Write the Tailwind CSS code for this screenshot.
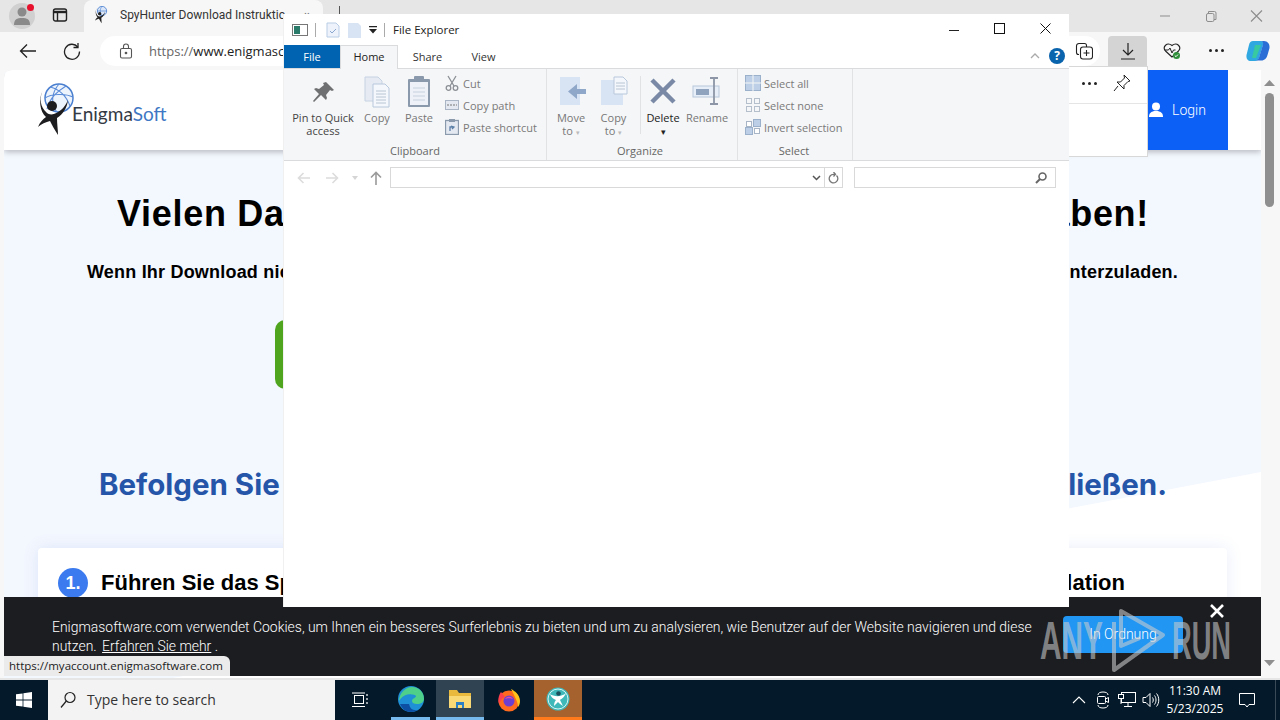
<!DOCTYPE html>
<html lang="de">
<head>
<meta charset="UTF-8">
<title>File Explorer</title>
<script src="https://cdn.jsdelivr.net/npm/@tailwindcss/browser@4"></script>
</head>
<body class="bg-[#e6e6e6]">
<div class="relative w-[1280px] h-[720px] overflow-hidden flex flex-col font-['Open_Sans',sans-serif]">

  <!-- browser tab strip -->
  <div class="h-[32px] bg-[#e6e6e6] flex items-end shrink-0">
    <div class="relative w-[44px] h-[32px] flex items-center justify-center -mt-[2px]">
      <div class="w-[26px] h-[26px] rounded-full bg-[#d0d0d0] flex items-center justify-center">
        <svg width="18" height="20" viewBox="0 0 18 20"><circle cx="9" cy="6" r="4.500" fill="#8a8a8a"/><path d="M1 19c0-6 3-7 8-7s8 1 8 7z" fill="#8a8a8a"/></svg>
      </div>
      <span class="absolute left-[27px] top-[4px] w-[7px] h-[7px] rounded-full bg-[#e8112d]"></span>
    </div>
    <div class="w-[32px] h-[32px] flex items-center justify-center pb-[2px]">
      <svg width="16" height="16" viewBox="0 0 16 16" fill="none" stroke="#222" stroke-width="1.400"><rect x="1.500" y="2" width="13" height="12" rx="2"/><path d="M1.500 5h13" stroke-width="2.400"/><path d="M5.500 5v9"/></svg>
    </div>
    <div class="relative ml-[8px] w-[239px] h-[32px] bg-[#f7f7f7] rounded-t-lg flex items-center pl-[9px] pb-[2px]">
      <svg width="16" height="18" viewBox="0 0 36 54"><circle cx="21" cy="15" r="14" fill="#dbe7f8" stroke="#4a7fd0" stroke-width="2.500"/><path d="M7 15h28M21 1c-7 8-7 20 0 28" stroke="#4a7fd0" stroke-width="2" fill="none"/><circle cx="14" cy="23" r="5" fill="#222"/><path d="M5 7C1 15 2 24 9 30c2 2 7 2 11-1 4-2 8-7 10-12-1 8-5 14-11 18 0 6 1 12 1 17-4-6-6-10-8-14-4 1-9 3-12 6 2-5 5-8 8-10C2 29 0 16 5 7z" fill="#222"/></svg>
      <span class="ml-[11px] w-[165px] overflow-hidden font-['Roboto',sans-serif] text-[12px] leading-[16px] text-[#333] whitespace-nowrap">SpyHunter Download Instruktic</span>
      <span class="absolute left-[220px] top-[10px] text-[10px] leading-none text-[#555]">×</span>
    </div>
    <div class="relative flex-1 h-[32px]">
      <span class="absolute left-[16px] top-[6px] w-px h-[8px] bg-[#555]"></span>
    </div>
    <div class="h-[32px] flex items-center">
      <svg class="w-[46px] h-[16px]" viewBox="0 0 46 16" fill="none" stroke="#8d8d8d"><path d="M18 8h10"/></svg>
      <svg class="w-[46px] h-[16px]" viewBox="0 0 46 16" fill="none" stroke="#8d8d8d"><rect x="18.500" y="5.500" width="7.500" height="8" rx="1.500"/><path d="M20.500 5V3.500h6a1.500 1.500 0 0 1 1.500 1.500v6.500h-2"/></svg>
      <svg class="w-[46px] h-[16px]" viewBox="0 0 46 16" fill="none" stroke="#8d8d8d" stroke-width="1.100"><path d="M17 2.500l11 11M28 2.500l-11 11"/></svg>
    </div>
  </div>

  <!-- browser toolbar -->
  <div class="h-[38px] bg-[#f7f7f7] flex items-center shrink-0 relative">
    <svg class="ml-[19px]" width="18" height="16" viewBox="0 0 18 16" fill="none" stroke="#222" stroke-width="1.300"><path d="M17 8H1.500M8 1.500 1.500 8 8 14.500"/></svg>
    <svg class="ml-[26px]" width="18" height="18" viewBox="0 0 18 18" fill="none" stroke="#222" stroke-width="1.300"><path d="M14.800 5A7.500 7.500 0 1 0 16.500 9.500"/><path d="M15 1v4.500h-4.500"/></svg>
    <div class="ml-[19px] w-[1000px] h-[30px] bg-white rounded-full flex items-center pl-[19px]">
      <svg width="14" height="16" viewBox="0 0 14 16" fill="none" stroke="#555" stroke-width="1.100"><rect x="1.500" y="5.500" width="11" height="9.500" rx="1.500"/><path d="M4.500 5.500V3.500a2.500 2.500 0 0 1 5 0v2"/><circle cx="7" cy="10" r=".8" fill="#555"/></svg>
      <span class="ml-[16px] text-[13px] leading-none whitespace-nowrap text-[#666]">https://<span class="text-[#222]">www.enigmasc</span></span>
    </div>
    <div class="absolute left-[1075px] top-[10px]">
      <svg width="18" height="18" viewBox="0 0 18 18" fill="none" stroke="#222" stroke-width="1.100"><path d="M4 12.500H3.500A2 2 0 0 1 1.500 10.500V4A2.500 2.500 0 0 1 4 1.500h5.500a2 2 0 0 1 2 2V5"/><rect x="5.500" y="5" width="12" height="12" rx="2.500"/><path d="M11.500 8v6M8.500 11h6"/></svg>
    </div>
    <div class="absolute left-[1108px] top-[4px] w-[39px] h-[30px] bg-[#d4d4d4] rounded-t flex items-center justify-center">
      <svg width="14" height="18" viewBox="0 0 14 18" fill="none" stroke="#222" stroke-width="1.200"><path d="M7 1v12M2 8l5 5 5-5M0 17h14"/></svg>
    </div>
    <div class="absolute left-[1163px] top-[10px]">
      <svg width="18" height="18" viewBox="0 0 18 18"><path d="M9 15 2.500 9C-1 5 4-.5 9 3.500 14-.5 19 5 15.500 9z" fill="none" stroke="#222" stroke-width="1.100"/><path d="M1.500 8h4l1.500-2 2 5 1.500-3h2" fill="none" stroke="#222" stroke-width="1"/><circle cx="13.500" cy="13.500" r="3.500" fill="#2f8f3a"/><path d="m11.800 13.500 1.200 1.200 2-2.200" stroke="#fff" fill="none"/></svg>
    </div>
    <div class="absolute left-[1209px] top-[17px] flex gap-[3px]">
      <span class="w-[3px] h-[3px] rounded-full bg-[#222]"></span><span class="w-[3px] h-[3px] rounded-full bg-[#222]"></span><span class="w-[3px] h-[3px] rounded-full bg-[#222]"></span>
    </div>
    <div class="absolute left-[1246px] top-[7px]">
      <svg width="24" height="24" viewBox="0 0 24 24"><path d="M7 2h8c2 0 2.500 2 2 4l-4 13c-.600 2-2 3-4 3H5c-3 0-5-2-4.500-6L3 6c.500-2.500 2-4 4-4z" fill="#2fa7e0"/><path d="M15 2h3c3.500 0 6 3 5.500 7l-2 7c-.700 3-3 5.500-6 5.500H9c2 0 3.500-1 4-3l4-13c.400-1.500-.500-3.500-2-3.500z" fill="#2b6fd6"/><path d="M9 6h6l-5 13H6z" fill="#38c9a0"/></svg>
    </div>
  </div>

  <!-- page viewport -->
  <div class="relative h-[608px] bg-[#f7f7f7] shrink-0 pl-[4px] pr-[2px] flex">
    <div class="relative w-[1257px] h-[608px] bg-[#f3f7fe] rounded-tl-lg overflow-hidden">
      <div class="absolute inset-0 bg-white [clip-path:polygon(100%_402px,0_640px,100%_640px)]"></div>

      <!-- site header -->
      <div class="relative h-[80px] bg-white shadow-[0_2px_6px_rgba(0,0,0,0.25)] flex items-center pl-[34px]">
        <svg width="36" height="54" viewBox="0 0 36 54"><circle cx="21" cy="15" r="14" fill="#eef4fc" stroke="#4a7fd0" stroke-width="1.500"/><path d="M7 15c6-4 20-5 28-1M12 4c8 2 16 8 20 19M21 1c-7 8-9 20-2 28M28 3C20 8 12 14 9 26" stroke="#5a8bd8" stroke-width="1.100" fill="none"/><circle cx="14" cy="23" r="5" fill="#1d1d1f"/><path d="M5 7C1 15 2 24 9 30c2 2 7 2 11-1 4-2 8-7 10-12-1 8-5 14-11 18 0 6 1 12 1 17-4-6-6-10-8-14-4 1-9 3-12 6 2-5 5-8 8-10C2 29 0 16 5 7z" fill="#1d1d1f"/></svg>
        <span class="-ml-[2px] mt-[7px] text-[19px] leading-none font-['Lato',sans-serif] text-[#333a44] whitespace-nowrap">Enigma<span class="text-[#3f78c4]">Soft</span></span>
        <div class="absolute left-[1144px] top-0 w-[80px] h-[80px] bg-[#0d60f5] flex items-center pl-[1px] gap-[9px] text-white">
          <svg width="14" height="16" viewBox="0 0 14 16" fill="#fff"><circle cx="7" cy="4.500" r="4"/><path d="M0 15c0-4 2-5 5-6h4c3 1 5 2 5 6z"/></svg>
          <span class="text-[14px] leading-none font-['Roboto',sans-serif] font-light">Login</span>
        </div>
      </div>

      <!-- download text -->
      <div class="relative">
        <div class="absolute left-[113px] top-[46px] w-[1032px] flex justify-between font-['Liberation_Sans',sans-serif] font-bold text-[36px] tracking-[0.7px] leading-none text-black whitespace-nowrap"><span>Vielen Dank</span><span>haben!</span></div>
        <div class="absolute left-[83px] top-[113px] w-[1091px] flex justify-between font-['Liberation_Sans',sans-serif] font-bold text-[18px] tracking-[0.2px] leading-none text-black whitespace-nowrap"><span>Wenn Ihr Download nicht</span><span>herunterzuladen.</span></div>
        <div class="absolute left-[271px] top-[170px] w-[30px] h-[69px] rounded-l-[10px] bg-[#4fa61e]"></div>
        <div class="absolute left-[95px] top-[320px] w-[1068px] flex justify-between font-['Inter',sans-serif] font-bold text-[29.500px] leading-none text-[#2455a8] whitespace-nowrap"><span>Befolgen Sie</span><span>abschließen.</span></div>
      </div>

      <!-- first step card -->
      <div class="absolute left-[34px] top-[478px] w-[1189px] h-[100px] bg-white rounded-t shadow-[0_0_16px_rgba(90,130,220,0.14)] flex items-start pl-[20px] pt-[20px]">
        <div class="w-[30px] h-[30px] rounded-full bg-[#3b7bef] flex items-center justify-center shrink-0 font-['Liberation_Sans',sans-serif] font-bold text-[18px] leading-none text-white">1.</div>
        <div class="ml-[13px] w-[1024px] flex justify-between font-['Liberation_Sans',sans-serif] font-bold text-[22px] leading-[30px] text-black whitespace-nowrap"><span>Führen Sie das Sp</span><span>Installation</span></div>
      </div>

      <!-- cookie banner -->
      <div class="absolute left-0 top-[527px] w-[1257px] h-[79px] bg-[#1c1d21] text-white">
        <p class="absolute left-[48px] top-[21px] w-[990px] font-['Roboto',sans-serif] font-light text-[13.950px] leading-[19px]">Enigmasoftware.com verwendet Cookies, um Ihnen ein besseres Surferlebnis zu bieten und um zu analysieren, wie Benutzer auf der Website navigieren und diese nutzen. <span class="ml-[2px] underline">Erfahren Sie mehr</span> .</p>
        <div class="absolute left-[1059px] top-[19px] w-[120px] h-[37px] bg-[#2196f3] rounded-sm flex items-center justify-center font-['Roboto',sans-serif] font-light text-[14px]">In Ordnung</div>
        <svg class="absolute left-[1206px] top-[7px]" width="14" height="14" viewBox="0 0 14 14" stroke="#fff" stroke-width="2.600"><path d="m1 1 12 12M13 1 1 13"/></svg>
        <div class="absolute left-0 top-[59px] w-[226px] h-[20px] bg-[#ebebeb] rounded-tr-md flex items-center pl-[5px] text-[11.500px] leading-none text-[#222] whitespace-nowrap">https://myaccount.enigmasoftware.com</div>
      </div>
    </div>

    <!-- browser scrollbar -->
    <div class="relative w-[15px] h-[608px] ml-[1px]">
      <svg class="absolute left-[2px] top-[10px]" width="11" height="6" viewBox="0 0 11 6" fill="#8f8f8f"><path d="M5.500 0 11 6H0z"/></svg>
      <div class="absolute left-[3px] top-[23px] w-[9px] h-[114px] rounded-full bg-[#8f8f8f]"></div>
      <svg class="absolute left-[2px] top-[590px]" width="11" height="6" viewBox="0 0 11 6" fill="#8f8f8f"><path d="M5.500 6 11 0H0z"/></svg>
    </div>
  </div>

  <div class="h-[2px] bg-[#e6e6e6] shrink-0"></div>

  <!-- taskbar -->
  <div class="h-[40px] bg-[#041a2a] flex items-stretch shrink-0 text-white">
    <div class="w-[48px] flex items-center justify-center">
      <svg width="16" height="16" viewBox="0 0 16 16" fill="#fff"><path d="M0 2.300 6.600 1.400v6.200H0zM7.400 1.300 16 0v7.600H7.400zM0 8.400h6.600v6.200L0 13.700zM7.400 8.400H16V16l-8.600-1.300z"/></svg>
    </div>
    <div class="w-[287px] bg-[#f3f3f3] flex items-center pl-[12px]">
      <svg width="16" height="18" viewBox="0 0 16 18" fill="none" stroke="#222" stroke-width="1.200"><circle cx="10" cy="6.500" r="5"/><path d="M6.300 10 1 16.500"/></svg>
      <span class="ml-[11px] text-[14px] leading-none text-[#333]">Type here to search</span>
    </div>
    <div class="w-[50px] flex items-center justify-center">
      <svg width="18" height="16" viewBox="0 0 18 16" fill="none" stroke="#fff"><rect x="3.500" y="3.500" width="9" height="8"/><path d="M1 1h13M1 14.500h13M16 2v2M16 6v2M16 10v2" stroke-width="1.200"/></svg>
    </div>
    <div class="relative w-[48px] ml-[2px] flex items-center justify-center pb-[2px]">
      <svg width="26" height="26" viewBox="0 0 26 26"><circle cx="13" cy="13" r="13" fill="#1f8fd6"/><path d="M1 15C1 7 8 1 14 1c7 0 12 5 12 12 0 3-3 5-7 5-3 0-5-1-5-3 0-3 4-3 4-5-2-3-13-3-17 5z" fill="#4fd08a"/><path d="M2 18c2 5 6 8 11 8 3 0 5-1 7-2-5 1-8-1-9-6-2 0-5 0-9 0z" fill="#0d4fa3"/></svg>
      <span class="absolute bottom-0 left-[4px] w-[39px] h-[3px] bg-[#76b9ed]"></span>
    </div>
    <div class="w-[48px] ml-[1px] bg-[#2f4352] flex items-center justify-center border-b-[3px] border-[#76b9ed]">
      <svg width="24" height="22" viewBox="0 0 24 22"><path d="M1 2h8l2 3h12v15H1z" fill="#e8b93c"/><path d="M1 8h22v12H1z" fill="#f9d976"/><path d="M8 14h8v6h-2v-3h-4v3H8z" fill="#2b7fc4"/></svg>
    </div>
    <div class="w-[50px] flex items-center justify-center pb-[1px]">
      <svg width="24" height="24" viewBox="0 0 24 24"><circle cx="12" cy="13" r="10.500" fill="#ff6a1f"/><path d="M14 1c4 2 9 6 9 12 0 3-1 5-2 6 0-5-3-10-7-18z" fill="#ffc21a"/><path d="M4 4c-3 4-3 9-2 12 1-3 3-6 6-7z" fill="#ff3f4e"/><circle cx="12" cy="13" r="5.500" fill="#6c3fd1"/><path d="M8 11c2-3 6-3 8 0-2-1-6-1-8 0z" fill="#e64fa0"/></svg>
    </div>
    <div class="w-[48px] bg-[#a5622f] flex items-center justify-center border-b-[3px] border-[#ff7a1a]">
      <svg width="24" height="24" viewBox="0 0 24 24"><circle cx="12" cy="12" r="11.500" fill="#3fb8ba"/><circle cx="12" cy="12" r="10" fill="none" stroke="#d8f3f3"/><circle cx="12.500" cy="6.500" r="2.300" fill="#1c4f5c"/><path d="M4 7c4 3 12 3 16-1-2 5-5 6-6 7l3 6c-2-1-4-3-5-4l-4 4c0-3 1-5 2-6-3-1-5-3-6-6z" fill="#fff"/></svg>
    </div>
    <div class="flex-1 flex items-center justify-end">
      <svg width="14" height="8" viewBox="0 0 14 8" fill="none" stroke="#fff" stroke-width="1.100"><path d="m1 7 6-6 6 6"/></svg>
      <svg class="ml-[9px]" width="16" height="18" viewBox="0 0 16 18" fill="none" stroke="#fff"><path d="M3 4c0-2 2-3 5-3s5 1 5 3M3 14c0 2 2 3 5 3s5-1 5-3"/><rect x="2.500" y="5.500" width="8" height="7" rx="1"/><path d="m10.500 8 3-1.500v5l-3-1.500"/></svg>
      <svg class="ml-[7px]" width="18" height="16" viewBox="0 0 18 16" fill="none" stroke="#fff"><rect x="3.500" y=".5" width="14" height="10"/><rect x=".5" y="2.500" width="5" height="4" fill="#041a2a"/><path d="M3 6.500V12M10 10.500v4M6 14.500h8"/></svg>
      <svg class="ml-[6px]" width="18" height="16" viewBox="0 0 18 16" fill="none" stroke="#fff"><path d="M1 5.500h3l4-4v13l-4-4H1z"/><path d="M10.500 5.500c1 1.500 1 3.500 0 5M12.500 3.500c2 2.500 2 6.500 0 9M14.500 1.500c3 3.500 3 9.500 0 13"/></svg>
      <div class="w-[70px] flex flex-col items-center text-[12px] leading-[18px]"><span>11:30 AM</span><span>5/23/2025</span></div>
      <svg class="ml-[9px]" width="16" height="16" viewBox="0 0 16 16" fill="none" stroke="#fff"><path d="M.5 1.500h15v11H10l-2 2.500-2-2.500H.5z"/></svg>
      <div class="w-[25px] h-[40px] relative"><span class="absolute right-[4px] top-0 h-[40px] w-px bg-[#3a4a56]"></span></div>
    </div>
  </div>

  <!-- download flyout peeking out beside the explorer -->
  <div class="absolute left-[1060px] top-[66px] w-[88px] h-[91px] bg-white border border-[#d8d8d8]">
    <div class="h-[37px] border-b border-[#e5e5e5] relative">
      <div class="absolute left-[21px] top-[15px] flex gap-[3px]"><span class="w-[3px] h-[3px] rounded-full bg-[#222]"></span><span class="w-[3px] h-[3px] rounded-full bg-[#222]"></span><span class="w-[3px] h-[3px] rounded-full bg-[#222]"></span></div>
      <svg class="absolute left-[52px] top-[7px]" width="18" height="18" viewBox="0 0 18 18" fill="none" stroke="#222"><path d="m11 1 6 6-2 .5-4 4 0 3.500-7-7 3.500 0 4-4zM5 12l-4 5"/></svg>
    </div>
  </div>

  <!-- File Explorer window -->
  <div class="absolute left-[283px] top-[14px] w-[786px] h-[593px] bg-white border-l border-[#f0f0f0] text-[#333] font-['Open_Sans',sans-serif]">
    <div class="h-[31px] flex items-center relative">
      <svg class="ml-[8px]" width="16" height="14" viewBox="0 0 16 14"><rect x=".5" y="1.500" width="15" height="11" fill="#fff" stroke="#777"/><rect x="2" y="3" width="6" height="8" fill="#2a7a6a"/></svg>
      <span class="ml-[7px] w-px h-[14px] bg-[#aaa]"></span>
      <svg class="ml-[10px]" width="14" height="16" viewBox="0 0 14 16"><path d="M1 1h9l3 3v11H1z" fill="#eef3fb" stroke="#b9cce6"/><path d="m4 9 2 2 4-4" stroke="#8aa8cf" fill="none"/></svg>
      <svg class="ml-[8px]" width="13" height="16" viewBox="0 0 13 16"><path d="M0 1h10l3 3v12H0z" fill="#d8e4f4"/></svg>
      <svg class="ml-[8px]" width="8" height="8" viewBox="0 0 8 8" fill="#222"><path d="M0 0h8v1.300H0zM0 3h8L4 7.500z"/></svg>
      <span class="ml-[7px] w-px h-[14px] bg-[#aaa]"></span>
      <span class="ml-[8px] text-[11.500px] leading-none text-[#222]">File Explorer</span>
      <svg class="absolute left-[664px] top-[10px]" width="12" height="12" viewBox="0 0 12 12" stroke="#222"><path d="M1 6.500h10"/></svg>
      <svg class="absolute left-[710px] top-[9px]" width="11" height="11" viewBox="0 0 11 11" fill="none" stroke="#111"><rect x=".5" y=".5" width="10" height="10"/></svg>
      <svg class="absolute left-[756px] top-[9px]" width="11" height="11" viewBox="0 0 11 11" stroke="#111"><path d="m.5.5 10 10M10.500.5l-10 10"/></svg>
    </div>
    <!-- ribbon tabs -->
    <div class="h-[24px] flex items-stretch border-b border-[#dadbdc] relative text-[11px]">
      <div class="w-[56px] h-[23px] pt-[1px] bg-[#0063b1] text-white flex items-center justify-center">File</div>
      <div class="w-[58px] h-[24px] bg-[#f5f6f7] border-x border-t border-[#dadbdc] flex items-center justify-center text-[#222]">Home</div>
      <div class="w-[59px] pt-[1px] flex items-center justify-center">Share</div>
      <div class="w-[53px] pt-[1px] flex items-center justify-center">View</div>
      <svg class="absolute left-[746px] top-[8px]" width="10" height="6" viewBox="0 0 10 6" fill="none" stroke="#aaa" stroke-width="1.300"><path d="m1 5 4-4 4 4"/></svg>
      <div class="absolute left-[765px] top-[3px] w-[16px] h-[16px] rounded-full bg-[#0a63ad] text-white text-[12px] font-bold leading-[16px] text-center">?</div>
    </div>
    <!-- ribbon -->
    <div class="h-[92px] bg-[#f5f6f7] border-b border-[#dadbdc] flex text-[11px] leading-[13px] text-[#777]">
      <!-- Clipboard -->
      <div class="w-[263px] border-r border-[#e1e2e3] relative">
        <div class="flex pl-[6px] pt-[7px]">
          <div class="w-[66px] flex flex-col items-center text-[#444]">
            <svg class="mt-[5px]" width="24" height="24" viewBox="0 0 24 24" fill="#6e7072"><path d="M15 1l8 8-2 1-2-1-4 5 1 3-1 2-5-5-7 7-1-1 6-7-5-5 2-1 3 1 5-4-1-2z"/></svg>
            <span class="mt-[6px] text-center whitespace-nowrap">Pin to Quick<br>access</span>
          </div>
          <div class="w-[42px] flex flex-col items-center">
            <svg width="26" height="32" viewBox="0 0 26 32"><path d="M1 1h13l4 4v20H1z" fill="#e6ebf3" stroke="#c6d2e2"/><path d="M9 8h12l4 4v19H9z" fill="#f4f7fb" stroke="#b8c8dc"/><path d="M12 15h10M12 18h10M12 21h10M12 24h10M12 27h10" stroke="#b9c4d2"/></svg>
            <span class="mt-[3px]">Copy</span>
          </div>
          <div class="w-[42px] flex flex-col items-center">
            <svg width="24" height="32" viewBox="0 0 24 32"><rect x="1" y="3" width="22" height="28" rx="1" fill="#8b99ad"/><rect x="3" y="6" width="18" height="23" fill="#eef2f8"/><rect x="7" y="0" width="10" height="6" rx="1" fill="#8b99ad"/><path d="M6 12h12M6 16h12M6 20h12M6 24h12" stroke="#c6d0dc"/></svg>
            <span class="mt-[3px]">Paste</span>
          </div>
          <div class="flex flex-col gap-[6px] -mt-[1px] ml-[5px] text-[#7a7a7a] whitespace-nowrap">
            <div class="h-[16px] flex items-center gap-[4px]"><svg width="14" height="16" viewBox="0 0 14 16" fill="none" stroke="#8c9096" stroke-width="1.300"><path d="m3 1 6 10M11 1 5 11"/><circle cx="3.500" cy="13" r="2.300"/><circle cx="10.500" cy="13" r="2.300"/></svg><span>Cut</span></div>
            <div class="h-[16px] flex items-center gap-[4px]"><svg width="14" height="10" viewBox="0 0 14 10"><rect x=".5" y=".5" width="13" height="9" fill="#e4e9f1" stroke="#a9b4c4"/><path d="M2 5h10" stroke="#777" stroke-dasharray="2 1"/></svg><span>Copy path</span></div>
            <div class="h-[16px] flex items-center gap-[4px]"><svg width="14" height="16" viewBox="0 0 14 16"><rect x=".5" y="1.500" width="13" height="14" fill="#e4e9f1" stroke="#8b99ad" stroke-width="1.300"/><rect x="4" y="0" width="6" height="3" fill="#8b99ad"/><path d="M5 12V8h4M6 7l3 1-2 2" stroke="#5c7fa8" fill="none" stroke-width="1.300"/></svg><span>Paste shortcut</span></div>
          </div>
        </div>
        <span class="absolute left-0 right-0 top-[75px] text-center text-[#666]">Clipboard</span>
      </div>
      <!-- Organize -->
      <div class="w-[191px] border-r border-[#e1e2e3] relative">
        <div class="flex pt-[7px] pl-[2px]">
          <div class="w-[44px] flex flex-col items-center">
            <svg class="ml-[4px]" width="28" height="32" viewBox="0 0 28 32"><rect x="1" y="1" width="20" height="28" fill="#d8e4f4"/><path d="M27 13h-9V8l-9 7.500 9 7.500v-5h9z" fill="#8fa7c8"/></svg>
            <span class="mt-[3px] text-center">Move<br>to <span class="text-[7px] text-[#bbb]">▾</span></span>
          </div>
          <div class="w-[41px] flex flex-col items-center">
            <svg width="28" height="32" viewBox="0 0 28 32"><rect x="1" y="4" width="22" height="25" fill="#d8e4f4"/><path d="M14 1h9l4 4v13H14z" fill="#f4f7fb" stroke="#b8c8dc"/><path d="M16 7h9M16 10h9M16 13h9" stroke="#b9c4d2"/></svg>
            <span class="mt-[3px] text-center">Copy<br>to <span class="text-[7px] text-[#bbb]">▾</span></span>
          </div>
          <span class="w-px h-[58px] bg-[#e1e2e3] ml-[6px]"></span>
          <div class="w-[44px] flex flex-col items-center text-[#222]">
            <svg class="mt-[2px]" width="26" height="26" viewBox="0 0 26 26" stroke="#7a8aa6" stroke-width="4.500"><path d="m2 2 22 22M24 2 2 24"/></svg>
            <span class="mt-[7px] text-center">Delete<br><span class="text-[9px] leading-[13px] text-[#222]">▾</span></span>
          </div>
          <div class="w-[44px] flex flex-col items-center">
            <svg class="mt-[1px]" width="30" height="28" viewBox="0 0 30 28"><rect x="1" y="9" width="26" height="11" fill="#e8eef7" stroke="#b8c8dc"/><rect x="4" y="12" width="13" height="6" fill="#8fa3bf"/><path d="M18 1h8M18 27h8M22 1v26" stroke="#8c96a6" stroke-width="1.800" fill="none"/></svg>
            <span class="mt-[6px]">Rename</span>
          </div>
        </div>
        <span class="absolute left-0 right-[4px] top-[75px] text-center text-[#666]">Organize</span>
      </div>
      <!-- Select -->
      <div class="w-[115px] border-r border-[#e1e2e3] relative">
        <div class="flex flex-col gap-[6px] pt-[6px] pl-[7px] text-[#7a7a7a] whitespace-nowrap">
          <div class="h-[16px] flex items-center gap-[3px]"><svg width="16" height="16" viewBox="0 0 16 16"><rect x=".5" y=".5" width="15" height="15" fill="#bccfe6" stroke="#9ab0cb"/><path d="M8 0v16M0 8h16" stroke="#f5f6f7"/></svg><span>Select all</span></div>
          <div class="h-[16px] flex items-center gap-[3px]"><svg width="16" height="16" viewBox="0 0 16 16" fill="none" stroke="#b5bfcc"><rect x="1.500" y="1.500" width="5" height="5"/><rect x="9.500" y="1.500" width="5" height="5"/><rect x="1.500" y="9.500" width="5" height="5"/><rect x="9.500" y="9.500" width="5" height="5"/></svg><span>Select none</span></div>
          <div class="h-[16px] flex items-center gap-[3px]"><svg width="16" height="16" viewBox="0 0 16 16"><g fill="#fff" stroke="#a8b5c6"><rect x="1.500" y="2.500" width="5" height="5"/><rect x="9.500" y="9.500" width="5" height="5"/></g><g fill="#bccfe6" stroke="#9ab0cb"><rect x="8.500" y=".5" width="7" height="7"/><rect x=".5" y="8.500" width="7" height="7"/></g></svg><span>Invert selection</span></div>
        </div>
        <span class="absolute left-0 right-[2px] top-[75px] text-center text-[#666]">Select</span>
      </div>
    </div>
    <!-- nav bar -->
    <div class="h-[35px] flex items-center relative -mt-px">
      <svg class="ml-[13px]" width="14" height="12" viewBox="0 0 14 12" fill="none" stroke="#dcdcdc" stroke-width="1.600"><path d="M13 6H2M6.500 1 1.500 6l5 5"/></svg>
      <svg class="ml-[14px]" width="14" height="12" viewBox="0 0 14 12" fill="none" stroke="#dcdcdc" stroke-width="1.600"><path d="M1 6h11M7.500 1l5 5-5 5"/></svg>
      <svg class="ml-[13px]" width="6" height="4" viewBox="0 0 6 4" fill="#d5d5d5"><path d="M0 0h6L3 4z"/></svg>
      <svg class="ml-[12px]" width="12" height="14" viewBox="0 0 12 14" fill="none" stroke="#9a9a9a" stroke-width="1.600"><path d="M6 14V2M1 6.500l5-5 5 5"/></svg>
      <div class="ml-[8px] w-[453px] h-[21px] border border-[#d9d9d9] flex items-center justify-end">
        <svg class="mr-[3px]" width="9" height="6" viewBox="0 0 9 6" fill="none" stroke="#555" stroke-width="1.500"><path d="m1 1 3.500 3.500L8 1"/></svg>
        <div class="w-[18px] h-[19px] border-l border-[#d9d9d9] flex items-center justify-center">
          <svg width="11" height="12" viewBox="0 0 11 12" fill="none" stroke="#777" stroke-width="1.300"><path d="M8.500 3.500a4.300 4.300 0 1 1-3-1.200H7M5.500 0 7.500 2.300 5.500 4.500"/></svg>
        </div>
      </div>
      <div class="ml-[11px] w-[202px] h-[21px] border border-[#d9d9d9] flex items-center justify-end pr-[8px]">
        <svg width="12" height="12" viewBox="0 0 12 12" fill="none" stroke="#666" stroke-width="1.600"><circle cx="7.500" cy="4.500" r="3.500"/><path d="M5 7 1 11" stroke-width="2"/></svg>
      </div>
    </div>
  </div>

  <!-- watermark -->
  <svg class="absolute left-[1030px] top-[600px] pointer-events-none" width="220" height="80" viewBox="0 0 220 80" fill="none">
    <text x="10" y="59" font-family="Liberation Sans" font-weight="700" font-size="53" textLength="63" lengthAdjust="spacingAndGlyphs" fill="rgba(205,205,205,0.58)">ANY</text>
    <text x="142" y="59" font-family="Liberation Sans" font-weight="700" font-size="53" textLength="59" lengthAdjust="spacingAndGlyphs" fill="rgba(205,205,205,0.58)">RUN</text>
    <path d="M84 22V70L133 35 91 11V46L110 38" stroke="rgba(205,205,205,0.58)" stroke-width="4" stroke-linejoin="round"/>
  </svg>
</div>
</body>
</html>
